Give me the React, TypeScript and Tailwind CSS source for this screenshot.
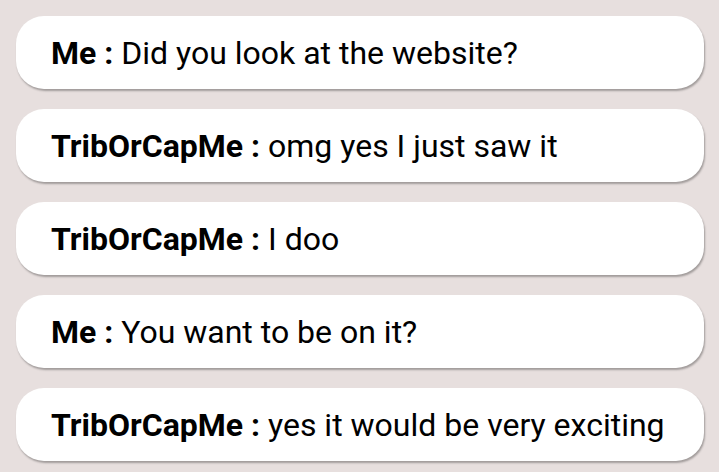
const messages = [
  { from: 'Me', text: 'Did you look at the website?' },
  { from: 'TribOrCapMe', text: 'omg yes I just saw it' },
  { from: 'TribOrCapMe', text: 'I doo' },
  { from: 'Me', text: 'You want to be on it?' },
  { from: 'TribOrCapMe', text: 'yes it would be very exciting' },
];

export default function App() {
  return (
    <div
      className="w-[719px] h-[472px] bg-[#e7dfde] flex flex-col gap-[20px] pt-[16px] pl-[16px] pr-[15px]"
      style={{ fontFamily: 'Roboto, sans-serif' }}
    >
      {messages.map((m, i) => (
        <div
          key={i}
          className="h-[73px] shrink-0 bg-white rounded-[28px] shadow-[1px_2px_2px_rgba(0,0,0,0.3)] flex items-center pl-[35px] text-[32px] leading-none text-black whitespace-pre"
        >
          <span className="font-bold">{m.from} :</span>
          <span>{' ' + m.text}</span>
        </div>
      ))}
    </div>
  );
}
